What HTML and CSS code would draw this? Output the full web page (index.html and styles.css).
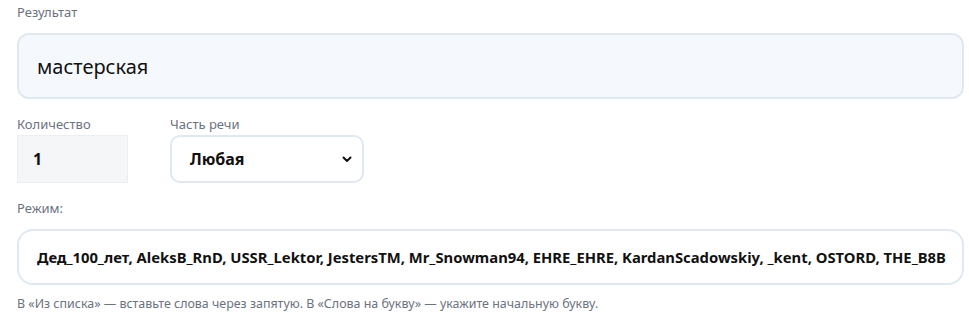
FILE: index.html
```
<!DOCTYPE html>
<html lang="ru">
<head>
<meta charset="utf-8">
<link rel="stylesheet" href="styles.css">
</head>
<body>
<div class="page">
  <div class="field">
    <label class="label">Результат</label>
    <div class="result">мастерская</div>
  </div>
  <div class="row">
    <div class="field">
      <label class="label">Количество</label>
      <div class="count">1</div>
    </div>
    <div class="field">
      <label class="label">Часть речи</label>
      <div class="select">
        <span>Любая</span>
        <svg class="chev" width="10" height="7" viewBox="0 0 10 7"><path d="M1.5 1.5 L5 5 L8.5 1.5" fill="none" stroke="#111" stroke-width="2" stroke-linecap="round" stroke-linejoin="round"/></svg>
      </div>
    </div>
  </div>
  <div class="field mode-field">
    <label class="label">Режим:</label>
    <div class="mode"><span class="mode-text">Дед_100_лет, AleksB_RnD, USSR_Lektor, JestersTM, Mr_Snowman94, EHRE_EHRE, KardanScadowskiy, _kent, OSTORD, THE_B8B</span></div>
    <p class="hint">В «Из списка» — вставьте слова через запятую. В «Слова на букву» — укажите начальную букву.</p>
  </div>
</div>
</body>
</html>
```
FILE: styles.css
```
html, body {
  margin: 0;
  padding: 0;
  background: #fff;
}
body {
  font-family: "Noto Sans", "Open Sans", sans-serif;
  color: #111;
}
.page {
  padding: 3px 5px 0 17px;
  display: flex;
  flex-direction: column;
}
.field {
  display: flex;
  flex-direction: column;
}
.label {
  font-size: 13px;
  color: #6b7280;
  line-height: 18px;
  height: 18px;
}
.result {
  margin-top: 12px;
  box-sizing: border-box;
  height: 66px;
  border: 2px solid #e0e8f1;
  border-radius: 12px;
  background: #f5f9fd;
  padding: 0 18px;
  display: flex;
  align-items: center;
  font-size: 20px;
  color: #111;
}
.row {
  display: flex;
  gap: 42px;
  margin-top: 16px;
}
.count {
  margin-top: 2px;
  width: 111px;
  height: 48px;
  box-sizing: border-box;
  background: #f4f6f8;
  border: 1px solid #eceff2;
  padding-left: 15px;
  display: flex;
  align-items: center;
  font-size: 16px;
  font-weight: 700;
}
.select {
  margin-top: 2px;
  width: 194px;
  height: 48px;
  box-sizing: border-box;
  border: 2px solid #e0e8f1;
  border-radius: 10px;
  background: #fff;
  padding: 0 10px 0 18px;
  display: flex;
  align-items: center;
  justify-content: space-between;
  font-size: 16px;
  font-weight: 700;
}
.chev { display: block; }
.mode-field {
  margin-top: 16px;
}
.mode {
  margin-top: 12px;
  height: 56px;
  box-sizing: border-box;
  border: 2px solid #e0e8f1;
  border-radius: 16px;
  background: #fff;
  padding: 0 12px 0 18px;
  display: flex;
  align-items: center;
  overflow: hidden;
  font-size: 14.8px;
  font-weight: 700;
}
.mode-text {
  white-space: nowrap;
  overflow: hidden;
}
.hint {
  margin: 11px 0 0;
  font-size: 12.45px;
  color: #6b7280;
  line-height: 16px;
}
```
